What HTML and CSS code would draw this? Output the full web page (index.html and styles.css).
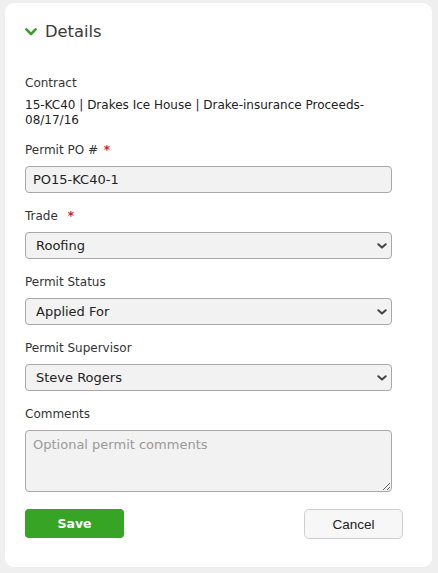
FILE: index.html
```html
<!DOCTYPE html>
<html>
<head>
<meta charset="utf-8">
<link rel="stylesheet" href="styles.css">
</head>
<body>
<div class="card">
  <div class="header">
    <svg class="chev" width="12" height="8" viewBox="0 0 12 8"><polyline points="1.4,1.4 6,6 10.6,1.4" fill="none" stroke="#3a9e2a" stroke-width="2.6" stroke-linecap="round" stroke-linejoin="round"/></svg>
    <span class="title">Details</span>
  </div>
  <div class="static">
    <div class="label">Contract</div>
    <div class="value">15-KC40 | Drakes Ice House | Drake-insurance Proceeds-08/17/16</div>
  </div>
  <div class="field">
    <div class="label">Permit PO # <span class="req">*</span></div>
    <input class="control" type="text" value="PO15-KC40-1">
  </div>
  <div class="field">
    <div class="label">Trade <span class="req wide">*</span></div>
    <div class="select-wrap">
      <select class="control sel"><option>Roofing</option></select>
      <svg class="arrow" width="10" height="6" viewBox="0 0 10 6"><polyline points="1.3,1.2 5,4.6 8.7,1.2" fill="none" stroke="#444" stroke-width="2" stroke-linecap="round" stroke-linejoin="round"/></svg>
    </div>
  </div>
  <div class="field">
    <div class="label">Permit Status</div>
    <div class="select-wrap">
      <select class="control sel"><option>Applied For</option></select>
      <svg class="arrow" width="10" height="6" viewBox="0 0 10 6"><polyline points="1.3,1.2 5,4.6 8.7,1.2" fill="none" stroke="#444" stroke-width="2" stroke-linecap="round" stroke-linejoin="round"/></svg>
    </div>
  </div>
  <div class="field">
    <div class="label">Permit Supervisor</div>
    <div class="select-wrap">
      <select class="control sel"><option>Steve Rogers</option></select>
      <svg class="arrow" width="10" height="6" viewBox="0 0 10 6"><polyline points="1.3,1.2 5,4.6 8.7,1.2" fill="none" stroke="#444" stroke-width="2" stroke-linecap="round" stroke-linejoin="round"/></svg>
    </div>
  </div>
  <div class="field last">
    <div class="label">Comments</div>
    <textarea class="control area" placeholder="Optional permit comments"></textarea>
  </div>
  <div class="buttons">
    <button class="btn save">Save</button>
    <button class="btn cancel">Cancel</button>
  </div>
</div>
</body>
</html>
```
FILE: styles.css
```css
html, body {
  margin: 0;
  padding: 0;
  background: #efefef;
}
body {
  padding: 3px 6px 6px 5px;
  font-family: "DejaVu Sans", Verdana, sans-serif;
  color: #333;
}
.card {
  width: 427px;
  box-sizing: border-box;
  background: #fff;
  border-radius: 9px;
  padding: 18px 29px 28px 20px;
}
.header {
  display: flex;
  align-items: center;
  height: 20px;
  margin-bottom: 33px;
}
.chev {
  margin-right: 8px;
  margin-top: 1px;
}
.title {
  font-size: 16.3px;
  color: #3a3a3a;
}
.label {
  font-size: 12px;
  line-height: 16px;
  color: #333;
}
.req {
  color: #e0191e;
  font-weight: bold;
  margin-left: 2px;
}
.req.wide {
  margin-left: 6px;
}
.static .label {
  padding-top: 1px;
  margin-bottom: 7px;
}
.static .value {
  font-size: 12px;
  line-height: 15px;
  color: #222;
  width: 366px;
  margin-bottom: 13px;
}
.field {
  margin-bottom: 14px;
}
.field .label {
  padding-top: 1px;
  margin-bottom: 8px;
}
.field.last {
  margin-bottom: 17px;
}
.control {
  display: block;
  box-sizing: border-box;
  width: 367px;
  height: 27px;
  margin: 0;
  border: 1px solid #a8a8a8;
  border-radius: 4px;
  background: #f2f2f2;
  font-family: "DejaVu Sans", Verdana, sans-serif;
  font-size: 13px;
  color: #222;
  padding: 0 7px;
  outline: none;
}
.select-wrap {
  position: relative;
  width: 367px;
}
.sel {
  appearance: none;
  -webkit-appearance: none;
  padding-left: 10px;
}
.arrow {
  position: absolute;
  right: 5px;
  top: 11px;
  pointer-events: none;
}
.area {
  height: 62px;
  padding: 6px 7px;
  resize: vertical;
  line-height: 16px;
}
.area::placeholder {
  color: #9a9a9a;
}
.buttons {
  display: flex;
  justify-content: space-between;
  align-items: flex-start;
}
.btn {
  box-sizing: border-box;
  width: 99px;
  margin: 0;
  cursor: pointer;
}
.save {
  height: 29px;
  background: #37a426;
  border: none;
  border-radius: 4px;
  color: #fff;
  font-family: "DejaVu Sans", Verdana, sans-serif;
  font-weight: bold;
  font-size: 12.5px;
}
.cancel {
  height: 30px;
  background: #f7f7f7;
  border: 1px solid #cfcfcf;
  border-radius: 5px;
  color: #222;
  font-family: "Liberation Sans", Arial, sans-serif;
  font-size: 13.5px;
}
```
